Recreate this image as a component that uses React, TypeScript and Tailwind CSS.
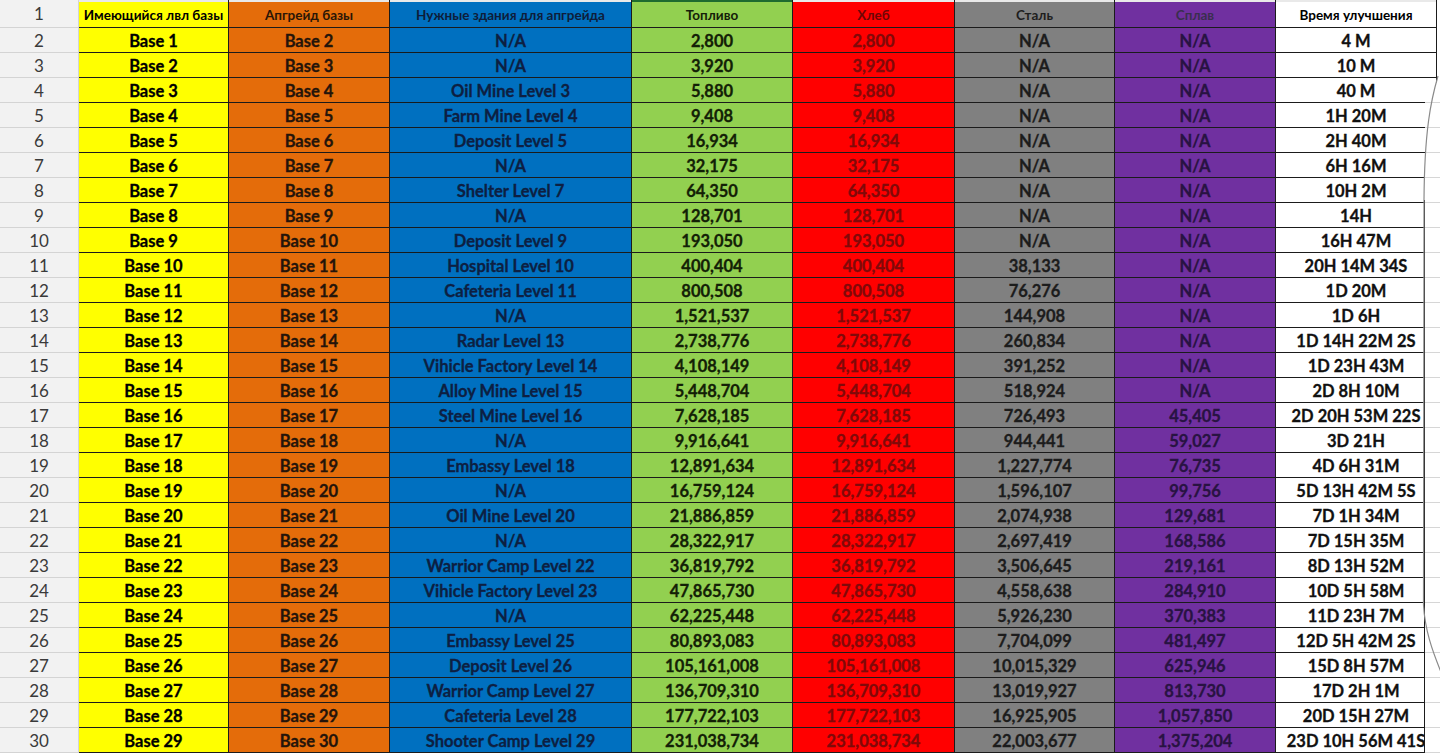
import type { ReactNode } from 'react'

type Row = {
  current: string
  next: string
  building: string
  fuel: string
  steel: string
  alloy: string
  time: string
}

const ROWS: Array<Row> = [
  { current: 'Base 1', next: 'Base 2', building: 'N/A', fuel: '2,800', steel: 'N/A', alloy: 'N/A', time: '4 M' },
  { current: 'Base 2', next: 'Base 3', building: 'N/A', fuel: '3,920', steel: 'N/A', alloy: 'N/A', time: '10 M' },
  { current: 'Base 3', next: 'Base 4', building: 'Oil Mine Level 3', fuel: '5,880', steel: 'N/A', alloy: 'N/A', time: '40 M' },
  { current: 'Base 4', next: 'Base 5', building: 'Farm Mine Level 4', fuel: '9,408', steel: 'N/A', alloy: 'N/A', time: '1H 20M' },
  { current: 'Base 5', next: 'Base 6', building: 'Deposit Level 5', fuel: '16,934', steel: 'N/A', alloy: 'N/A', time: '2H 40M' },
  { current: 'Base 6', next: 'Base 7', building: 'N/A', fuel: '32,175', steel: 'N/A', alloy: 'N/A', time: '6H 16M' },
  { current: 'Base 7', next: 'Base 8', building: 'Shelter Level 7', fuel: '64,350', steel: 'N/A', alloy: 'N/A', time: '10H 2M' },
  { current: 'Base 8', next: 'Base 9', building: 'N/A', fuel: '128,701', steel: 'N/A', alloy: 'N/A', time: '14H' },
  { current: 'Base 9', next: 'Base 10', building: 'Deposit Level 9', fuel: '193,050', steel: 'N/A', alloy: 'N/A', time: '16H 47M' },
  { current: 'Base 10', next: 'Base 11', building: 'Hospital Level 10', fuel: '400,404', steel: '38,133', alloy: 'N/A', time: '20H 14M 34S' },
  { current: 'Base 11', next: 'Base 12', building: 'Cafeteria Level 11', fuel: '800,508', steel: '76,276', alloy: 'N/A', time: '1D 20M' },
  { current: 'Base 12', next: 'Base 13', building: 'N/A', fuel: '1,521,537', steel: '144,908', alloy: 'N/A', time: '1D 6H' },
  { current: 'Base 13', next: 'Base 14', building: 'Radar Level 13', fuel: '2,738,776', steel: '260,834', alloy: 'N/A', time: '1D 14H 22M 2S' },
  { current: 'Base 14', next: 'Base 15', building: 'Vihicle Factory Level 14', fuel: '4,108,149', steel: '391,252', alloy: 'N/A', time: '1D 23H 43M' },
  { current: 'Base 15', next: 'Base 16', building: 'Alloy Mine Level 15', fuel: '5,448,704', steel: '518,924', alloy: 'N/A', time: '2D 8H 10M' },
  { current: 'Base 16', next: 'Base 17', building: 'Steel Mine Level 16', fuel: '7,628,185', steel: '726,493', alloy: '45,405', time: '2D 20H 53M 22S' },
  { current: 'Base 17', next: 'Base 18', building: 'N/A', fuel: '9,916,641', steel: '944,441', alloy: '59,027', time: '3D 21H' },
  { current: 'Base 18', next: 'Base 19', building: 'Embassy Level 18', fuel: '12,891,634', steel: '1,227,774', alloy: '76,735', time: '4D 6H 31M' },
  { current: 'Base 19', next: 'Base 20', building: 'N/A', fuel: '16,759,124', steel: '1,596,107', alloy: '99,756', time: '5D 13H 42M 5S' },
  { current: 'Base 20', next: 'Base 21', building: 'Oil Mine Level 20', fuel: '21,886,859', steel: '2,074,938', alloy: '129,681', time: '7D 1H 34M' },
  { current: 'Base 21', next: 'Base 22', building: 'N/A', fuel: '28,322,917', steel: '2,697,419', alloy: '168,586', time: '7D 15H 35M' },
  { current: 'Base 22', next: 'Base 23', building: 'Warrior Camp Level 22', fuel: '36,819,792', steel: '3,506,645', alloy: '219,161', time: '8D 13H 52M' },
  { current: 'Base 23', next: 'Base 24', building: 'Vihicle Factory Level 23', fuel: '47,865,730', steel: '4,558,638', alloy: '284,910', time: '10D 5H 58M' },
  { current: 'Base 24', next: 'Base 25', building: 'N/A', fuel: '62,225,448', steel: '5,926,230', alloy: '370,383', time: '11D 23H 7M' },
  { current: 'Base 25', next: 'Base 26', building: 'Embassy Level 25', fuel: '80,893,083', steel: '7,704,099', alloy: '481,497', time: '12D 5H 42M 2S' },
  { current: 'Base 26', next: 'Base 27', building: 'Deposit Level 26', fuel: '105,161,008', steel: '10,015,329', alloy: '625,946', time: '15D 8H 57M' },
  { current: 'Base 27', next: 'Base 28', building: 'Warrior Camp Level 27', fuel: '136,709,310', steel: '13,019,927', alloy: '813,730', time: '17D 2H 1M' },
  { current: 'Base 28', next: 'Base 29', building: 'Cafeteria Level 28', fuel: '177,722,103', steel: '16,925,905', alloy: '1,057,850', time: '20D 15H 27M' },
  { current: 'Base 29', next: 'Base 30', building: 'Shooter Camp Level 29', fuel: '231,038,734', steel: '22,003,677', alloy: '1,375,204', time: '23D 10H 56M 41S' },
]

function HeaderCell({ fill, children }: { fill: string; children: ReactNode }) {
  // 2px pale strip above the header, like the sheet's column bar
  return (
    <div className="flex flex-col bg-[#e9e9e9]">
      <div className="h-[2px]" />
      <div
        className={`flex flex-1 items-center justify-center whitespace-nowrap pt-[2px] text-[13.5px] font-bold ${fill}`}
      >
        {children}
      </div>
    </div>
  )
}

function Cell({ fill, children }: { fill: string; children: ReactNode }) {
  return (
    <div
      className={`flex items-center justify-center whitespace-nowrap pt-[3px] text-[16.5px] font-bold [-webkit-text-stroke:0.3px_currentColor] ${fill}`}
    >
      {children}
    </div>
  )
}

function RowNumbers() {
  return (
    <div className="flex w-[79px] flex-col gap-y-px bg-[#d4d4d4] pr-px pb-px">
      <div className="flex h-[27px] items-end justify-center bg-[#f2f2f2] pb-px text-[17px] text-[#3a3a3a]">
        1
      </div>
      {ROWS.map((_, i) => (
        <div
          key={i}
          className="flex h-[24px] items-center justify-center bg-[#f2f2f2] pt-[2px] text-[17px] text-[#3a3a3a]"
        >
          {i + 2}
        </div>
      ))}
    </div>
  )
}

function Sheet() {
  return (
    <div className="grid grid-cols-[149px_160px_241px_160px_161px_159px_160px_160px] auto-rows-[24px] grid-rows-[27px] gap-px bg-[#1b1b1b] pr-px pb-px">
      <HeaderCell fill="bg-[#ffff00] text-black">Имеющийся лвл базы</HeaderCell>
      <HeaderCell fill="bg-[#e46c0a] text-[#2a1606]">Апгрейд базы</HeaderCell>
      <HeaderCell fill="bg-[#0070c0] text-[#0e1d3a]">Нужные здания для апгрейда</HeaderCell>
      <div className="flex flex-col">
        <div className="h-[2px] bg-[#1e6b2f]" />
        <div className="flex flex-1 items-center justify-center bg-[#92d050] pt-[2px] text-[13.5px] font-bold text-[#152008]">
          Топливо
        </div>
      </div>
      <HeaderCell fill="bg-[#ff0000] text-[#6e0505]">Хлеб</HeaderCell>
      <HeaderCell fill="bg-[#808080] text-[#1e1e1e]">Сталь</HeaderCell>
      <HeaderCell fill="bg-[#7030a0] text-[#3a2e4e]">Сплав</HeaderCell>
      <HeaderCell fill="bg-white text-black">Время улучшения</HeaderCell>
      {ROWS.map((row) => (
        <SheetRow key={row.current} row={row} />
      ))}
    </div>
  )
}

function SheetRow({ row }: { row: Row }) {
  return (
    <>
      <Cell fill="bg-[#ffff00] text-black">{row.current}</Cell>
      <Cell fill="bg-[#e46c0a] text-[#24140a]">{row.next}</Cell>
      <Cell fill="bg-[#0070c0] text-[#0d1f42]">{row.building}</Cell>
      <Cell fill="bg-[#92d050] text-[#132006]">{row.fuel}</Cell>
      <Cell fill="bg-[#ff0000] text-[#800909]">{row.fuel}</Cell>
      <Cell fill="bg-[#808080] text-[#1c1c1c]">{row.steel}</Cell>
      <Cell fill="bg-[#7030a0] text-[#281342]">{row.alloy}</Cell>
      <Cell fill="bg-white text-[#111]">{row.time}</Cell>
    </>
  )
}

// the bracket-like curve that sits over the right edge of the sheet
function EdgeCurve() {
  return (
    <svg
      className="pointer-events-none absolute top-0 right-0"
      width="20"
      height="754"
      viewBox="1420 0 20 754"
    >
      <path
        d="M1437.5 78 C1431 100 1424.5 130 1424.5 200 L1424.5 754 L1441 754 L1441 78 Z"
        fill="#ffffff"
      />
      {Array.from({ length: 28 }, (_, i) => {
        const y = 102.5 + i * 25
        return <line key={y} x1="1425" x2="1440" y1={y} y2={y} stroke="#d6d6d6" />
      })}
      <line x1="1424.5" x2="1424.5" y1="200" y2="753" stroke="#1b1b1b" />
      <path
        d="M1438 76 C1431 100 1424.5 130 1424 200 L1423.5 605 C1425 630 1432 650 1441 672"
        fill="none"
        stroke="#8a8a8a"
        strokeWidth="1.2"
      />
    </svg>
  )
}

export default function App() {
  return (
    <div
      className="relative flex h-[754px] w-[1440px] items-start overflow-hidden bg-white"
      style={{ fontFamily: 'Lato, "Noto Sans", sans-serif' }}
    >
      <RowNumbers />
      <Sheet />
      <EdgeCurve />
    </div>
  )
}
